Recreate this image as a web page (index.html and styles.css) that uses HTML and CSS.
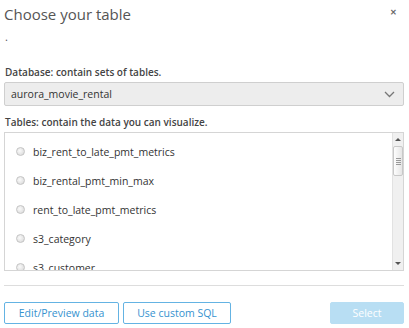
FILE: index.html
```html
<!DOCTYPE html>
<html lang="en">
<head>
    <meta charset="UTF-8">
    <title>Choose your table</title>
    <link rel="stylesheet" href="styles.css">
</head>
<body>
    <div class="dialog">
        <div class="dialog-header">
            <h1>Choose your table</h1>
            <span class="close-btn">&#x2715;</span>
        </div>

        <p class="note">.</p>

        <label class="field-label">Database: contain sets of tables.</label>
        <div class="select-box">
            <span>aurora_movie_rental</span>
            <svg class="chevron" width="11" height="7" viewBox="0 0 11 7">
                <path d="M1 1 L5.5 5.5 L10 1" fill="none" stroke="#777" stroke-width="1.3"/>
            </svg>
        </div>

        <label class="field-label">Tables: contain the data you can visualize.</label>
        <div class="table-list">
            <ul class="table-items">
                <li><span class="radio"></span>biz_rent_to_late_pmt_metrics</li>
                <li><span class="radio"></span>biz_rental_pmt_min_max</li>
                <li><span class="radio"></span>rent_to_late_pmt_metrics</li>
                <li><span class="radio"></span>s3_category</li>
                <li><span class="radio"></span>s3_customer</li>
            </ul>
            <div class="scrollbar">
                <span class="arrow up"></span>
                <div class="thumb">
                    <span></span><span></span><span></span><span></span>
                </div>
                <div class="track"></div>
                <span class="arrow down"></span>
            </div>
        </div>

        <div class="divider"></div>

        <div class="dialog-footer">
            <button class="btn-outline btn-edit">Edit/Preview data</button>
            <button class="btn-outline btn-sql">Use custom SQL</button>
            <button class="btn-primary" disabled>Select</button>
        </div>
    </div>
</body>
</html>
```

FILE: styles.css
```css
:root {
    --border-color: #d5d5d5;
    --label-color: #444;
    --blue: #3592cf;
    --blue-border: #64b3e3;
}

* {
    margin: 0;
    padding: 0;
    box-sizing: border-box;
}

body {
    font-family: 'Open Sans', Arial, sans-serif;
    color: #333;
    background-color: white;
}

.dialog {
    width: 400px;
    margin-left: 4px;
}

.dialog-header {
    display: flex;
    justify-content: space-between;
    align-items: flex-start;
    padding-top: 3px;
    height: 30px;
}

.dialog-header h1 {
    font-size: 15px;
    font-weight: 400;
    color: #555;
    line-height: 22px;
}

.close-btn {
    font-size: 8px;
    font-weight: 700;
    color: #6a6a6a;
    margin-top: 3px;
    margin-right: 7px;
}

.note {
    font-size: 11px;
    color: #555;
    line-height: 14px;
    height: 35px;
    padding-left: 1px;
}

.field-label {
    display: block;
    font-size: 10px;
    font-weight: 600;
    color: var(--label-color);
    padding-left: 1px;
    line-height: 15px;
    margin-bottom: 2px;
}

.select-box {
    display: flex;
    justify-content: space-between;
    align-items: center;
    height: 24px;
    padding: 0 8px 0 6px;
    background-color: #ededed;
    border: 1px solid #cfcfcf;
    border-radius: 2px;
    font-size: 10.5px;
    color: #333;
    margin-bottom: 9px;
}

.table-list {
    display: flex;
    height: 139px;
    border: 1px solid var(--border-color);
    overflow: hidden;
}

.table-items {
    flex: 1;
    list-style-type: none;
    padding: 4px 0 0 11px;
}

.table-items li {
    display: flex;
    align-items: center;
    height: 29px;
    font-size: 10.5px;
    color: #333;
    white-space: nowrap;
}

.radio {
    width: 9px;
    height: 9px;
    border-radius: 50%;
    border: 1px solid #c4c4c4;
    background: radial-gradient(circle at 40% 40%, #fafafa, #d6d6d6);
    margin-right: 8px;
}

.scrollbar {
    width: 11px;
    display: flex;
    flex-direction: column;
    align-items: center;
    background-color: #f0f0f0;
    border-left: 1px solid #e2e2e2;
}

.arrow {
    width: 0;
    height: 0;
    border-left: 3px solid transparent;
    border-right: 3px solid transparent;
    margin: 5px 0;
}

.arrow.up {
    border-bottom: 3px solid #555;
}

.arrow.down {
    border-top: 3px solid #555;
}

.thumb {
    width: 10px;
    height: 30px;
    background: linear-gradient(to right, #fdfdfd, #e6e6e6);
    border: 1px solid #c8c8c8;
    border-radius: 2px;
    display: flex;
    flex-direction: column;
    align-items: center;
    justify-content: center;
    gap: 1px;
}

.thumb span {
    width: 5px;
    height: 1px;
    background-color: #999;
}

.track {
    flex: 1;
}

.divider {
    height: 1px;
    background-color: #ddd;
    margin-top: 14px;
    margin-bottom: 16px;
}

.dialog-footer {
    display: flex;
    gap: 4px;
}

.btn-outline,
.btn-primary {
    height: 22px;
    font-family: inherit;
    font-size: 10.5px;
    border-radius: 2px;
    padding: 0;
    white-space: nowrap;
}

.btn-outline {
    background-color: white;
    color: var(--blue);
    border: 1px solid var(--blue-border);
}

.btn-edit {
    width: 115px;
}

.btn-sql {
    width: 108px;
}

.btn-primary {
    margin-left: auto;
    width: 74px;
    background-color: #b8def3;
    color: white;
    border: 1px solid #b8def3;
}
```
